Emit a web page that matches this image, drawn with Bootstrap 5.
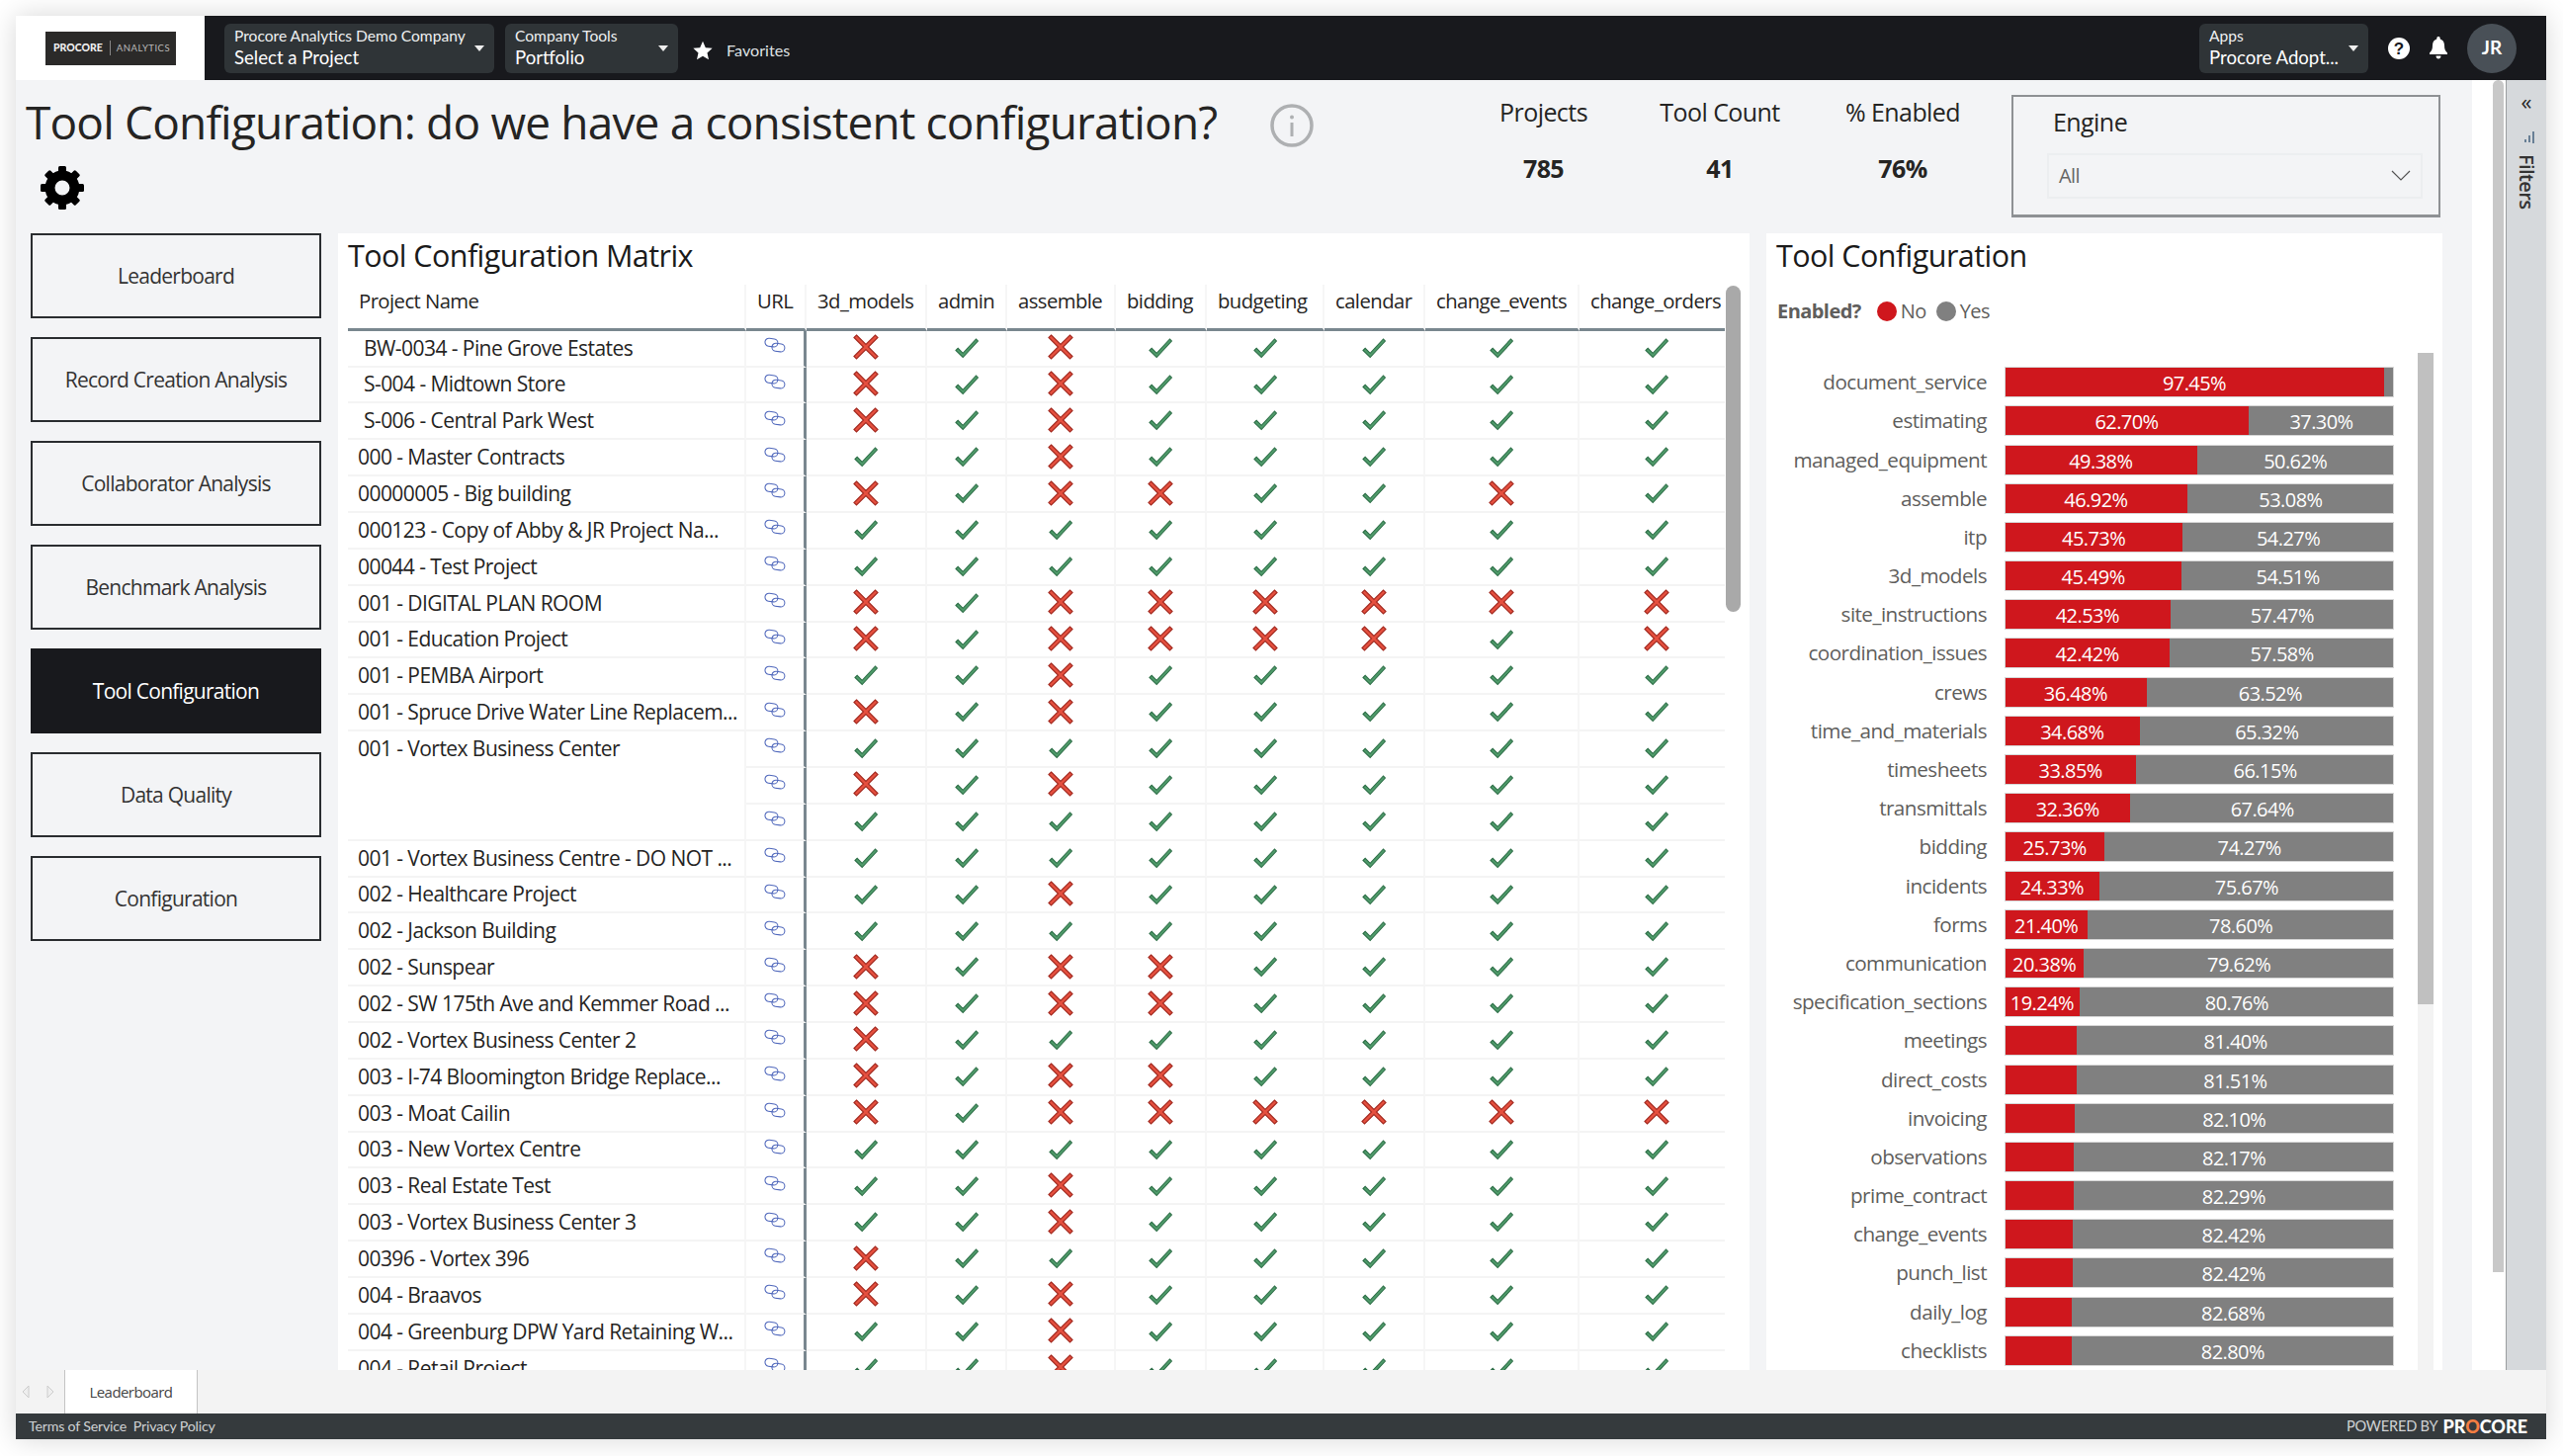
<!DOCTYPE html>
<html lang="en">
<head>
<meta charset="utf-8">
<title>Tool Configuration</title>
<link href="https://cdn.jsdelivr.net/npm/bootstrap@5.3.0/dist/css/bootstrap.min.css" rel="stylesheet">
<style>
html,body{background:#fff;overflow:hidden;height:100%}
body{font-family:"Open Sans","Liberation Sans",sans-serif;color:#252423;letter-spacing:-.035em}
.shell{width:2560px;height:1440px;margin:16px 0 0 16px;box-shadow:0 0 26px rgba(0,0,0,.16);background:#fff}
.topbar{height:65px;background:#18191d;font-family:Lato,sans-serif;letter-spacing:0;color:#fff}
.logocell{width:191px;height:65px;background:#fff}
.logobox{width:132px;height:34px;background:#2b2a29;color:#fff;font-size:10.5px;line-height:1;padding-left:3px}
.logobox b{font-weight:900;letter-spacing:0;color:#eee}
.logobox i{font-style:normal;color:#bbb;font-size:9.5px;letter-spacing:.5px;border-left:1px solid #888;padding:3px 0 3px 6px;margin-left:7px}
.pick{height:50px;background:#2f3437;border-radius:6px;padding:2px 10px;position:relative}
.pick-a{width:273px;margin-left:20px}
.pick-b{width:175px;margin-left:11px}
.pick-c{width:171px;margin-right:20px}
.pick small{display:block;font-size:15.6px;line-height:20px;color:#eef0f1}
.pick span{display:block;font-size:18.6px;line-height:24px;margin-top:0}
.pick::after{content:"";position:absolute;right:10px;top:22px;border:5px solid transparent;border-top:6px solid #eee;border-bottom:0}
.favs{font-size:16.2px;color:#dfe1e3;margin-left:15px;margin-top:6px}
.favs svg{margin-right:14px}
.tbicon{margin-right:20px}
.avatar{width:50px;height:50px;border-radius:50%;background:#495057;font-size:19px;font-weight:700;margin-right:30px}
.mainarea{height:1305px}
.canvasarea{width:2485px;background:#f3f4f6}
.gutter{width:34px;background:#fff;padding-left:21px}
.pagethumb{width:11px;height:1206px;background:#c8c8c8;border-radius:6px 6px 0 0}
.fpane{width:41px;background:#d6d9dc;border-left:1px solid #9a9da0;color:#252423;position:relative}
.fpane .chev{font-size:22px;line-height:22px;margin-top:10px;letter-spacing:0}
.fpane .fic{margin:19px 0 0 5px}
.fpane .ftxt{writing-mode:vertical-rl;font-size:20px;font-weight:600;letter-spacing:-.6px;margin-top:10px;color:#333}
.head{height:157px;padding-left:10px}
.titleblock{width:1449px}
h1.pgtitle{font-size:46px;font-weight:400;margin:0;line-height:62px;padding-top:0;letter-spacing:-.018em;white-space:nowrap}
.titlerow{padding-top:11px}
.infoic{margin-left:54px;margin-top:8px}
.gearic{display:block;margin:13.5px 0 0 15px}
.kpi{font-size:25px;text-align:center;padding-top:15px}
.kpi div{line-height:34px}
.kpi b{display:block;line-height:34px;margin-top:23px;font-weight:700}
.k1{width:173px}.k2{width:184px}.k3{width:186px}
.enginebox{width:434px;height:124px;margin:15px 0 0 17px;border:2px solid #8e9194;border-bottom-width:3px;padding:7px 16px 0 35px;font-size:25px}
.enginebox .enlab{padding-left:5px}
.enginebox .ddl{height:46px;margin:12px 0 0 -1px;border:2px solid #eceef0;font-size:20px;color:#666;padding:0 10px}
.sidecol{margin-left:15px;width:294px;gap:19px}
.sidecol .btn{height:86px;border:2px solid #2a2d30;border-radius:0;background:transparent;font-size:21px;letter-spacing:-.035em;color:#333;display:flex;align-items:center;justify-content:center;width:294px;padding:2px 0 0}
.sidecol .btn.on{background:#18191d;color:#fff;border-color:#18191d}
.panelw{background:#fff;position:relative;overflow:hidden}
.pm{width:1428px;margin-left:17px}
.pc{width:684px;margin-left:17px}
.ptitle{font-size:30.5px;font-weight:400;line-height:42px;margin:0;padding:1px 0 0 10px;color:#1a1a1a}
.mwrap{margin:9px 0 0 10px;width:1393px;overflow:hidden}
table.mtx{width:1403px;table-layout:fixed;border-collapse:separate;border-spacing:0;margin:0;font-size:21px;color:#252423;--bs-table-bg:transparent}
.mtx.table>:not(caption)>*>*{padding:0;border-bottom:2px solid #f4f4f4;border-right:2px solid #f6f6f6;box-shadow:none;vertical-align:middle;line-height:1}
.mtx.table>thead>tr>th{height:47px;font-weight:400;font-size:20.3px;padding:0 0 10px 11px;border-bottom:3px solid #79878f;white-space:nowrap}
.mtx.table>tbody>tr>td{height:36.86px;text-align:center}
.mtx.table>tbody>tr>td.nm{text-align:left;padding-left:10px;white-space:nowrap;overflow:hidden}
.mtx.table>tbody>tr>td.nm.ind{padding-left:16px}
.mtx.table>tbody>tr>td.nm.tp{vertical-align:top;padding-top:7px}
.mtx.table>tbody>tr>td.ur{border-right:3px solid #79878f}
.mtx svg{position:relative;top:-1px}
.mtx .ur svg{top:-5px}
.mthumb{position:absolute;left:1404px;top:53px;width:15px;height:330px;border-radius:8px;background:#a9a9a9}
.legendrow{height:24px;margin:24px 0 0 11px;font-size:20px;color:#605e5c}
.ldot{width:20px;height:20px;border-radius:50%;display:inline-block}
.ldot2{margin-left:10px}
.chartgrid{display:grid;grid-template-columns:223px 394px;column-gap:18px;grid-auto-rows:31px;row-gap:8.2px;margin-top:44.5px}
.blab{text-align:right;font-size:20.7px;line-height:30px;color:#605e5c}
.bbar{display:flex;height:31px;color:#fff;font-size:20px;line-height:33px;text-align:center;outline:1px solid #d6d6d6;outline-offset:-1px}
.bbar>div{height:100%;overflow:hidden;white-space:nowrap}
.sno{background:#cf171d}.syes{background:#808080}
.ctrack{position:absolute;left:659px;top:121px;bottom:0;width:16px;background:#f3f3f3}
.cthumb{height:659px;background:#c0c0c0}
.tabbar{height:44px;background:#f3f3f3}
.tabarrows{width:49px;padding-left:6px;gap:17px}
.tabitem{width:135px;background:#fff;border-left:1px solid #c4c4c4;border-right:1px solid #c4c4c4;font-size:15px;color:#444}
.foot{height:26px;background:#353a3d;color:#cfd2d4;font-family:Lato,sans-serif;font-size:14.2px;letter-spacing:-.2px;padding:0 19px 0 13px}
.foot .pw{font-size:14.6px}
.foot b{color:#fff;font-weight:900;font-size:18px;letter-spacing:0;margin-left:5px}
.foot b em{font-style:normal;color:#f47e42}
</style>
</head>
<body>
<div class="shell d-flex flex-column">
  <nav class="topbar navbar p-0 flex-nowrap justify-content-start">
    <div class="logocell d-flex align-items-center justify-content-center"><div class="logobox d-flex align-items-center justify-content-center"><b>PROCORE</b><i>ANALYTICS</i></div></div>
    <div class="pick pick-a"><small>Procore Analytics Demo Company</small><span>Select a Project</span></div>
    <div class="pick pick-b"><small>Company Tools</small><span>Portfolio</span></div>
    <div class="favs d-flex align-items-center"><svg width="20" height="20" viewBox="0 0 24 24"><polygon fill="#fff" points="12,1 15.4,8.6 23.6,9.4 17.4,14.9 19.2,23 12,18.8 4.8,23 6.6,14.9 .4,9.4 8.6,8.6"/></svg>Favorites</div>
    <div class="ms-auto d-flex align-items-center">
      <div class="pick pick-c"><small>Apps</small><span>Procore Adopt...</span></div>
      <svg class="tbicon" width="22" height="22" viewBox="0 0 22 22"><circle cx="11" cy="11" r="11" fill="#fff"/><text x="11" y="17" font-family="Liberation Sans" font-size="17" font-weight="700" text-anchor="middle" fill="#18191d">?</text></svg>
      <svg class="tbicon" width="18" height="24" viewBox="0 0 18 24"><path fill="#fff" d="M9 0c1 0 1.7.7 1.7 1.7v.7C13.600 3.200 15 5.800 15 8.800c0 4 .9 6 3 7.700v1.500H0v-1.500c2.100-1.700 3-3.700 3-7.700 0-3 1.400-5.600 4.300-6.400v-.7C7.300.7 8 0 9 0zM6.500 19.500h5C11.500 21.200 10.400 22.500 9 22.500s-2.500-1.300-2.500-3z"/></svg>
      <div class="avatar d-flex align-items-center justify-content-center">JR</div>
    </div>
  </nav>
  <div class="mainarea d-flex">
    <div class="canvasarea d-flex flex-column">
      <div class="head d-flex">
        <div class="titleblock">
          <div class="titlerow d-flex align-items-center">
            <h1 class="pgtitle">Tool Configuration: do we have a consistent configuration?</h1>
            <svg class="infoic" width="44" height="44" viewBox="0 0 44 44"><circle cx="22" cy="22" r="20" fill="none" stroke="#aeb0b2" stroke-width="3.500"/><rect x="20.500" y="19" width="3" height="14" fill="#aeb0b2"/><circle cx="22" cy="13.500" r="2" fill="#aeb0b2"/></svg>
          </div>
          <svg class="gearic" width="44" height="44" viewBox="0 0 44 44"><circle cx="22" cy="22" r="12.500" fill="none" stroke="#000" stroke-width="10"/><g fill="#000"><rect x="18" y="0" width="8" height="9" rx="1.500"/><rect x="18" y="0" width="8" height="9" rx="1.500" transform="rotate(45 22 22)"/><rect x="18" y="0" width="8" height="9" rx="1.500" transform="rotate(90 22 22)"/><rect x="18" y="0" width="8" height="9" rx="1.500" transform="rotate(135 22 22)"/><rect x="18" y="0" width="8" height="9" rx="1.500" transform="rotate(180 22 22)"/><rect x="18" y="0" width="8" height="9" rx="1.500" transform="rotate(225 22 22)"/><rect x="18" y="0" width="8" height="9" rx="1.500" transform="rotate(270 22 22)"/><rect x="18" y="0" width="8" height="9" rx="1.500" transform="rotate(315 22 22)"/></g></svg>
        </div>
        <div class="kpi k1"><div>Projects</div><b>785</b></div>
        <div class="kpi k2"><div>Tool Count</div><b>41</b></div>
        <div class="kpi k3"><div>% Enabled</div><b>76%</b></div>
        <div class="enginebox"><div class="enlab">Engine</div><div class="ddl d-flex align-items-center justify-content-between"><span>All</span><svg width="20" height="11" viewBox="0 0 20 11"><path d="M1 1l9 9 9-9" fill="none" stroke="#555" stroke-width="1.200"/></svg></div></div>
      </div>
      <div class="d-flex flex-grow-1" style="min-height:0">
        <div class="sidecol d-flex flex-column">
          <a class="btn" href="#">Leaderboard</a>
          <a class="btn" href="#">Record Creation Analysis</a>
          <a class="btn" href="#">Collaborator Analysis</a>
          <a class="btn" href="#">Benchmark Analysis</a>
          <a class="btn on" href="#">Tool Configuration</a>
          <a class="btn" href="#">Data Quality</a>
          <a class="btn" href="#">Configuration</a>
        </div>
        <section class="panelw pm">
          <h2 class="ptitle">Tool Configuration Matrix</h2>
          <div class="mwrap">
            <table class="table mtx">
              <colgroup><col style="width:403px"><col style="width:61px"><col style="width:122px"><col style="width:81px"><col style="width:110px"><col style="width:92px"><col style="width:119px"><col style="width:102px"><col style="width:156px"><col style="width:157px"></colgroup>
              <thead><tr><th>Project Name</th><th>URL</th><th>3d_models</th><th>admin</th><th>assemble</th><th>bidding</th><th>budgeting</th><th>calendar</th><th>change_events</th><th>change_orders</th></tr></thead>
              <tbody id="mbody"></tbody>
            </table>
          </div>
          <div class="mthumb"></div>
        </section>
        <section class="panelw pc">
          <h2 class="ptitle">Tool Configuration</h2>
          <div class="legendrow d-flex align-items-center"><b>Enabled?</b><span class="ldot sno ms-3"></span><span class="ms-1">No</span><span class="ldot ldot2 syes"></span><span class="ms-1">Yes</span></div>
          <div class="chartgrid" id="cgrid"></div>
          <div class="ctrack"><div class="cthumb"></div></div>
        </section>
      </div>
    </div>
    <div class="gutter"><div class="pagethumb"></div></div>
    <aside class="fpane d-flex flex-column align-items-center">
      <div class="chev">«</div>
      <svg class="fic" width="14" height="14" viewBox="0 0 14 14"><path d="M11 1v12M7 5v7M3 9v3" stroke="#3b5a78" stroke-width="1.400" fill="none"/></svg>
      <div class="ftxt">Filters</div>
    </aside>
  </div>
  <div class="tabbar d-flex">
    <div class="tabarrows d-flex align-items-center"><svg width="8" height="14" viewBox="0 0 8 14"><path d="M7 1L1 7l6 6z" fill="#eee" stroke="#ccc"/></svg><svg width="8" height="14" viewBox="0 0 8 14"><path d="M1 1l6 6-6 6z" fill="#eee" stroke="#ccc"/></svg></div>
    <div class="tabitem d-flex align-items-center justify-content-center">Leaderboard</div>
  </div>
  <footer class="foot d-flex align-items-center justify-content-between">
    <div>Terms of Service&nbsp; Privacy Policy</div>
    <div class="pw d-flex align-items-center">POWERED BY<b>PR<em>O</em>CORE</b></div>
  </footer>
</div>
<svg width="0" height="0" class="position-absolute">
  <symbol id="ok" viewBox="0 0 26 22"><path d="M2 13.500l2.200-2.200 5 5L22.500 2l1.900 2.100L9.200 20.500z" fill="#4f9b6a" stroke="#2e6f48" stroke-width="1.100"/></symbol>
  <symbol id="no" viewBox="0 0 26 26"><path d="M3.500 1L13 10.500 22.500 1 25 3.500 15.500 13 25 22.500 22.500 25 13 15.500 3.500 25 1 22.500 10.500 13 1 3.500z" fill="#e6503f" stroke="#a32a20" stroke-width="1.200"/></symbol>
  <symbol id="lk" viewBox="0 0 22 16"><g fill="none" stroke="#5068bc" stroke-width="1.050"><rect x="1" y="1.500" width="13" height="8" rx="4" transform="rotate(8 7 5)"/><rect x="8" y="6.500" width="13" height="8" rx="4" transform="rotate(8 14 10)"/></g></symbol>
</svg>
<script src="https://cdn.jsdelivr.net/npm/bootstrap@5.3.0/dist/js/bootstrap.bundle.min.js"></script>
<script>
var rows=[
["BW-0034 - Pine Grove Estates","","XVXVVVVV",1],
["S-004 - Midtown Store","","XVXVVVVV",1],
["S-006 - Central Park West","","XVXVVVVV",1],
["000 - Master Contracts","","VVXVVVVV"],
["00000005 - Big building","","XVXXVVXV"],
["000123 - Copy of Abby &amp; JR Project Na...","","VVVVVVVV"],
["00044 - Test Project","","VVVVVVVV"],
["001 - DIGITAL PLAN ROOM","","XVXXXXXX"],
["001 - Education Project","","XVXXXXVX"],
["001 - PEMBA Airport","","VVXVVVVV"],
["001 - Spruce Drive Water Line Replacem...","","XVXVVVVV"],
["001 - Vortex Business Center","r","VVVVVVVV"],
[null,"","XVXVVVVV"],
[null,"","VVVVVVVV"],
["001 - Vortex Business Centre - DO NOT ...","","VVVVVVVV"],
["002 - Healthcare Project","","VVXVVVVV"],
["002 - Jackson Building","","VVVVVVVV"],
["002 - Sunspear","","XVXXVVVV"],
["002 - SW 175th Ave and Kemmer Road ...","","XVXXVVVV"],
["002 - Vortex Business Center 2","","XVVVVVVV"],
["003 - I-74 Bloomington Bridge Replace...","","XVXXVVVV"],
["003 - Moat Cailin","","XVXXXXXX"],
["003 - New Vortex Centre","","VVVVVVVV"],
["003 - Real Estate Test","","VVXVVVVV"],
["003 - Vortex Business Center 3","","VVXVVVVV"],
["00396 - Vortex 396","","XVVVVVVV"],
["004 - Braavos","","XVXVVVVV"],
["004 - Greenburg DPW Yard Retaining W...","","VVXVVVVV"],
["004 - Retail Project","","VVXVVVVV"]];
var h="";
rows.forEach(function(r){
  h+="<tr>";
  if(r[0]!==null){
    var c="nm"+(r[3]?" ind":"")+(r[1]==="r"?" tp":"");
    h+='<td class="'+c+'"'+(r[1]==="r"?' rowspan="3"':"")+">"+r[0]+"</td>";
  }
  h+='<td class="ur"><svg width="22" height="16"><use href="#lk"/></svg></td>';
  r[2].split("").forEach(function(v){
    h+=v==="V"?'<td><svg width="26" height="22"><use href="#ok"/></svg></td>':'<td><svg width="26" height="26"><use href="#no"/></svg></td>';
  });
  h+="</tr>";
});
document.getElementById("mbody").innerHTML=h;
var bars=[["document_service",97.45,1,0],["estimating",62.70,1,1],["managed_equipment",49.38,1,1],["assemble",46.92,1,1],["itp",45.73,1,1],["3d_models",45.49,1,1],["site_instructions",42.53,1,1],["coordination_issues",42.42,1,1],["crews",36.48,1,1],["time_and_materials",34.68,1,1],["timesheets",33.85,1,1],["transmittals",32.36,1,1],["bidding",25.73,1,1],["incidents",24.33,1,1],["forms",21.40,1,1],["communication",20.38,1,1],["specification_sections",19.24,1,1],["meetings",18.60,0,1],["direct_costs",18.49,0,1],["invoicing",17.90,0,1],["observations",17.83,0,1],["prime_contract",17.71,0,1],["change_events",17.58,0,1],["punch_list",17.58,0,1],["daily_log",17.32,0,1],["checklists",17.20,0,1]];
var g="";
bars.forEach(function(b){
  var y=(100-b[1]).toFixed(2);
  g+='<div class="blab">'+b[0]+'</div><div class="bbar"><div class="sno" style="width:'+b[1]+'%">'+(b[2]?b[1].toFixed(2)+"%":"")+'</div><div class="syes" style="width:'+y+'%">'+(b[3]?y+"%":"")+"</div></div>";
});
document.getElementById("cgrid").innerHTML=g;
</script>
</body>
</html>
